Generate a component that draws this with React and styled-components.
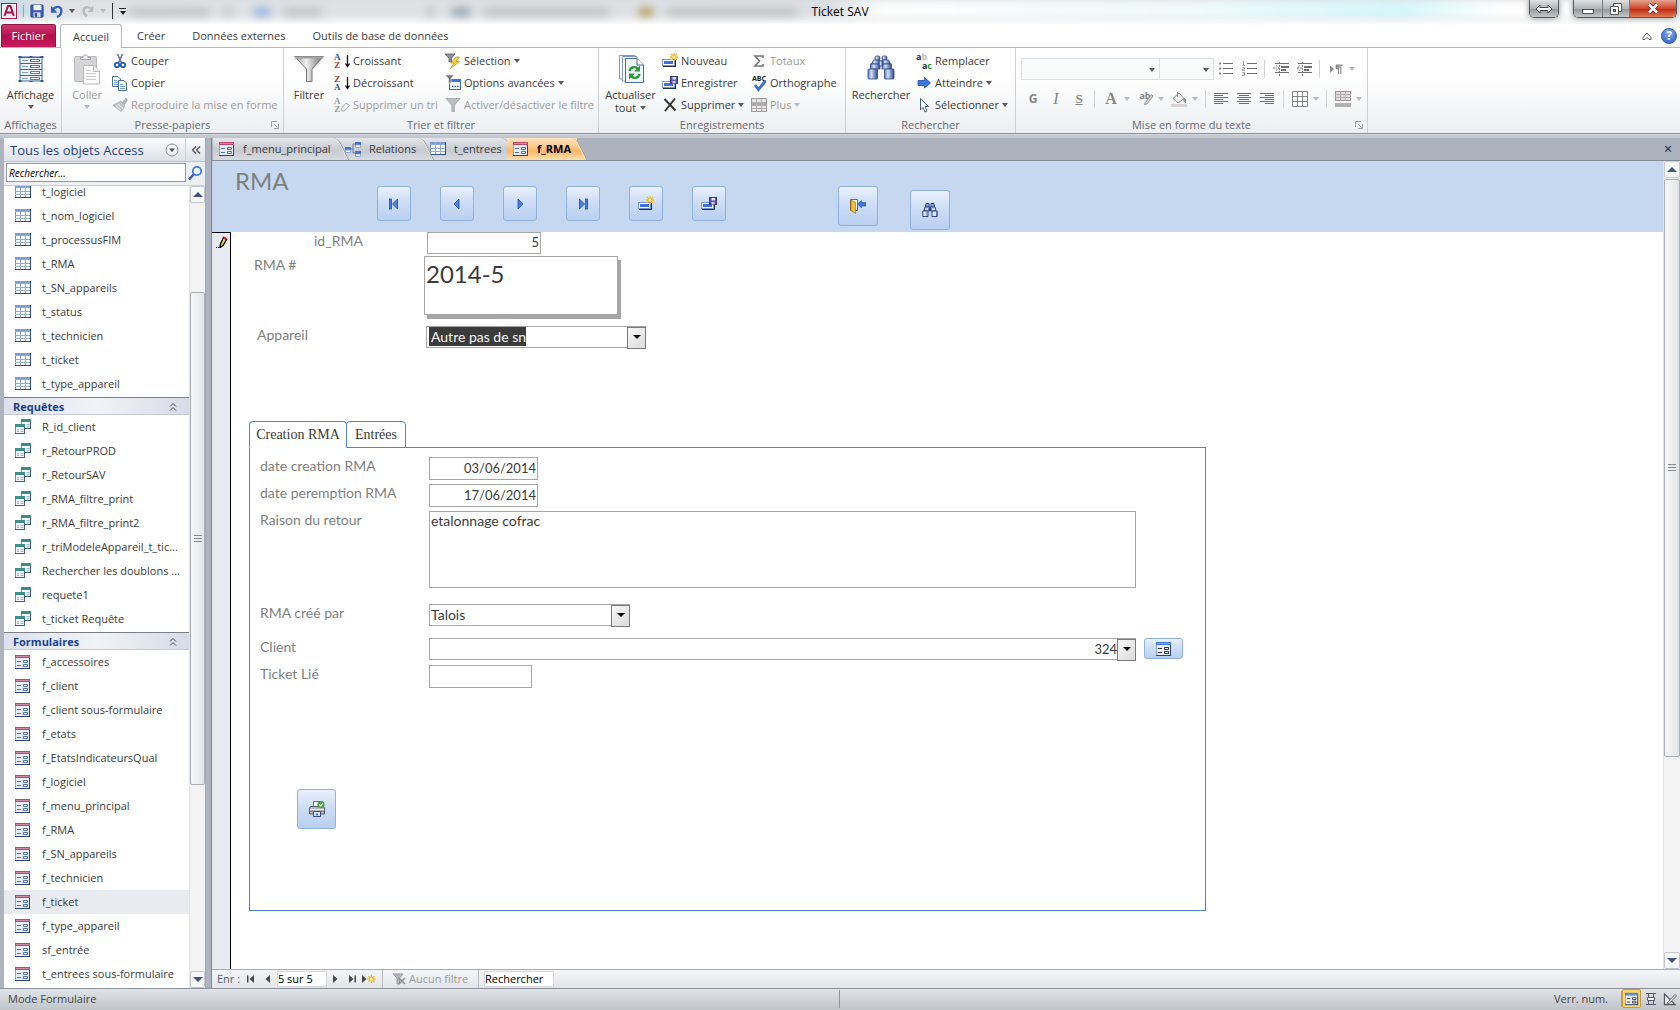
import React from "react";
import styled, { createGlobalStyle, css } from "styled-components";

const UI = '"Open Sans", "Noto Sans", "DejaVu Sans", sans-serif';
const FORM = 'Lato, "Open Sans", sans-serif';
const SERIF = '"Liberation Serif", "DejaVu Serif", serif';

const Global = createGlobalStyle`
  * { box-sizing: border-box; }
  html, body, #root { height: 100%; }
  body { margin: 0; font: 11px/16px ${UI}; color: #3b3b3b; background: #fff; overflow: hidden; }
  button, input, select, textarea { font: inherit; color: inherit; margin: 0; padding: 0; border: 0; border-radius: 0; background: none; outline: 0; }
  button { cursor: default; white-space: nowrap; }
  svg { display: block; flex: none; }
`;

/* ---------- Icons ---------- */

const Record16 = () => (
  <g>
    <rect x="1" y="7" width="13" height="7" fill="#1f2f55" />
    <rect x=".5" y="6.500" width="12" height="6" fill="#fff" stroke="#7b95c9" />
    <rect x="2" y="8" width="9" height="3" fill="#3c72dd" />
  </g>
);

const Spark = ({ x = 12, y = 4, r = 4 }) => (
  <g stroke="#f3b51d" strokeWidth="1.3">
    <path d={`M${x - r} ${y}H${x + r}M${x} ${y - r}V${y + r}M${x - r * 0.75} ${y - r * 0.75}L${x + r * 0.75} ${y + r * 0.75}M${x + r * 0.75} ${y - r * 0.75}L${x - r * 0.75} ${y + r * 0.75}`} />
    <circle cx={x} cy={y} r="1.6" fill="#fff3a8" stroke="none" />
  </g>
);

const Funnel = ({ fill = "#8d9299", edge = "#5e636b" }) => (
  <path d="M1 1.5H15L9.5 8V14.5H6.8V8Z" fill={fill} stroke={edge} strokeWidth=".8" />
);

const Lines = ({ rows, color = "#6f6f6f" }) => (
  <path d={rows.map(([x, y, w]) => `M${x} ${y + 0.5}h${w}`).join("")} stroke={color} />
);

const Sheet = ({ x, y }) => (
  <g transform={`translate(${x} ${y})`}>
    <rect x=".5" y=".5" width="9" height="9" fill="#f4f8fd" stroke="#6b88ab" />
    <rect x="0" y="0" width="10" height="3" fill="#3a8f8c" />
    <path d="M2 5.500h2M5.500 5.500h3M2 7.500h2M5.500 7.500h3" stroke="#9bb2d1" />
    <path d="M0 9.500H10M9.500 3V10" stroke="#3b5780" />
  </g>
);

const Binoculars = ({ id }) => (
  <g>
    <defs>
      <linearGradient id={id} x1="0" x2="1">
        <stop offset="0" stopColor="#5a78b5" />
        <stop offset=".35" stopColor="#d3e0f7" />
        <stop offset="1" stopColor="#2c4887" />
      </linearGradient>
    </defs>
    <g fill={`url(#${id})`} stroke="#2f4a86" strokeWidth=".8">
      <rect x="8" y="1" width="5" height="4" rx="1.5" />
      <rect x="15" y="1" width="5" height="4" rx="1.5" />
      <path d="M6.500 5H13V9H4.500Z" />
      <path d="M15 5H21.500L23.500 9H15Z" />
      <rect x="3.500" y="9" width="9.500" height="5" />
      <rect x="15" y="9" width="9.500" height="5" />
      <rect x="12" y="6" width="4" height="5" />
      <rect x="1" y="14" width="9.500" height="10" rx="1" />
      <rect x="17.500" y="14" width="9.500" height="10" rx="1" />
    </g>
  </g>
);

const Page = ({ x, y }) => (
  <g transform={`translate(${x} ${y})`}>
    <path d="M.5 .5H6L8.500 3V10.500H.5Z" fill="#fff" stroke="#4a6ea8" />
    <path d="M2 4.500h3M2 6.500h5M2 8.500h5" stroke="#6d9be0" />
  </g>
);

const FormArt = ({ head, ink }) => (
  <g>
    <rect x=".5" y="1.500" width="14" height="13" fill="#e7eefb" stroke="#8ea5cb" />
    <rect x="0" y="1" width="15" height="3" fill={head} />
    <path d="M1 2.500H14" stroke="#fff" strokeOpacity=".35" />
    <path d="M2 7.500H6M2 11.500H6" stroke={ink} />
    <path d="M8.500 6.500H12.500V8.500H8.500ZM8.500 10.500H12.500V12.500H8.500Z" fill="#fff" stroke={ink} />
    <path d="M0 14.500H15M14.500 4V15" stroke="#2e466f" />
  </g>
);

const ICONS = {
  app: [16, (
    <g>
      <rect x=".5" y=".5" width="15" height="15" fill="#fff" stroke="#a3194d" />
      <rect x="2" y="2" width="12" height="12" fill="#f9e6ee" />
      <path d="M3.500 13L7 3H9.500L12.800 13M5.500 9.500H11" fill="none" stroke="#a3194d" strokeWidth="2" />
    </g>
  )],
  save: [16, (
    <g>
      <rect x="1" y="1" width="14" height="14" rx="1" fill="#3a5cbf" stroke="#28408c" />
      <rect x="4" y="1" width="9" height="6" fill="#eef4ff" />
      <rect x="4" y="9.500" width="8" height="5.500" fill="#cfd9ee" />
      <rect x="5.500" y="10.500" width="2.500" height="4" fill="#28408c" />
    </g>
  )],
  undo: [16, (
    <g fill="none">
      <path d="M3 7C6 2 13 2 13 8C13 12 10 14 8 15" stroke="#2f62c9" strokeWidth="2.600" />
      <path d="M1 2V10H8.500Z" fill="#2f62c9" />
    </g>
  )],
  redo: [16, (
    <g fill="none">
      <path d="M12 6C9 2 3 3 3 8C3 11 5 13 7 14" stroke="#b7bbc0" strokeWidth="2.600" />
      <path d="M14 2V9H7.500Z" fill="#b7bbc0" />
    </g>
  )],
  formView: [28, (
    <g>
      <rect x="3" y="2" width="22" height="24" fill="#eef3fb" stroke="#3c64a0" />
      {[2, 8, 14, 20].map((y) => (
        <g key={y}>
          <path d={`M3 ${y + 0.5}H25`} stroke="#3c64a0" />
          <path d={`M5 ${y + 3.5}h6`} stroke="#7f9fcb" />
          <rect x="13.500" y={y + 2.5} width="9" height="2" fill="#fff" stroke="#5c80b8" />
        </g>
      ))}
      <path d="M1.500 1h3v2h-3zM23.500 1h3v2h-3zM1.500 25h3v2h-3zM23.500 25h3v2h-3zM12.500 1h3v1h-3zM12.500 26h3v1h-3z" fill="#2d5793" />
    </g>
  )],
  paste: [32, (
    <g>
      <rect x="3.500" y="3.500" width="22" height="25" rx="1.500" fill="#d5d5d8" stroke="#b9b9bc" />
      <path d="M9.500 6.500V4.500H12C12 1 17 1 17 4.500H19.500V6.500Z" fill="#eee" stroke="#a7a7ab" />
      <path d="M12.500 12.500H23L28.500 18V31H12.500Z" fill="#fafafa" stroke="#bbb" />
      <path d="M22.500 12.500V18.500H28.500" fill="#eee" stroke="#bbb" />
      <path d="M15 17.500h5M15 20.500h10M15 23.500h10M15 26.500h10" stroke="#ccc" />
    </g>
  )],
  cut: [16, (
    <g fill="none">
      <path d="M5.500 1L9.500 10M10.500 1L6.500 10" stroke="#5c6f91" strokeWidth="1.500" />
      <circle cx="5" cy="12" r="2.200" stroke="#1f5ac0" strokeWidth="1.800" />
      <circle cx="11" cy="12" r="2.200" stroke="#1f5ac0" strokeWidth="1.800" />
    </g>
  )],
  copy: [16, <g><Page x={0} y={1} /><Page x={6} y={5} /></g>],
  brush: [16, (
    <g>
      <path d="M10 6L14 1L15.500 3L12 8Z" fill="#b4b4b4" stroke="#999" strokeWidth=".6" />
      <path d="M1 8L9 4L13 9L9 14.500Z" fill="#c6c6c6" stroke="#aaa" strokeWidth=".7" />
      <path d="M4 9L9 13M6 7L11 11.500" stroke="#efefef" />
    </g>
  )],
  funnelBig: [32, (
    <g>
      <defs>
        <linearGradient id="fb" x1="0" x2="1">
          <stop offset="0" stopColor="#8d8d8d" /><stop offset=".4" stopColor="#f1f1f1" /><stop offset="1" stopColor="#6b6b6b" />
        </linearGradient>
      </defs>
      <path d="M1.500 3.500H30.500L19 16V28.500H13.500V16Z" fill="url(#fb)" stroke="#757575" />
      <path d="M2 4.500H30" stroke="#a4a4a4" strokeWidth="2" />
    </g>
  )],
  funnelGrey: [16, <Funnel fill="#bcbcbc" edge="#a2a2a2" />],
  arrowDown16: [16, <path d="M13.500 2V13M11.500 10.500L13.500 13.500L15.500 10.500" stroke="#111" fill="none" strokeWidth="1.300" />],
  eraser: [16, <path d="M7 12L12 6L15.500 8.500L10.500 14H8Z" fill="#f1f1f1" stroke="#aaa" />],
  selection: [16, (
    <g>
      <path d="M0 1H10L6.500 5V9H4V5Z" fill="#8f949b" stroke="#555b63" strokeWidth=".8" />
      <path d="M11 4L6 10H9L5.500 15.500L14.500 8.500H11L14.500 4Z" fill="#fcd344" stroke="#c98a14" strokeWidth=".7" />
    </g>
  )],
  advanced: [16, (
    <g>
      <rect x="4.500" y="4.500" width="11" height="10" fill="#f6faff" stroke="#4268a8" />
      <rect x="4" y="4" width="12" height="3" fill="#3f78d8" />
      <path d="M7 11.500h1.500M9.500 11.500h1.500M12 11.500h1.500" stroke="#3f62a0" strokeWidth="1.500" />
      <path d="M0 0H9L6 3.500V8H3.500V3.500Z" fill="#70757d" stroke="#fff" strokeWidth=".5" />
    </g>
  )],
  refresh: [32, (
    <g fill="#fff" stroke="#7c99c4">
      <path d="M4.500 2.500H20V26H4.500Z" /><path d="M7.500 3.500H22V28H7.500Z" />
      <path d="M10.500 5.500H22L28.500 12V29.500H10.500Z" fill="#eef5fe" stroke="#4b6da3" />
      <path d="M22 5.500V12H28.500" fill="#fff" stroke="#4b6da3" />
      <g fill="none" stroke="#2e9a35" strokeWidth="2.400">
        <path d="M14.500 18C15.500 13.500 21 13 23 16" /><path d="M24.500 21C23.500 25.500 18 26 16 23" />
      </g>
      <path d="M25 12.500V18.500H19Z" fill="#2e9a35" stroke="none" /><path d="M14 26.500V20.500H20Z" fill="#2e9a35" stroke="none" />
    </g>
  )],
  newRecord: [16, <g><Record16 /><Spark /></g>],
  saveRecord: [16, (
    <g><Record16 /><rect x="8.500" y="1.500" width="7" height="7" fill="#5a55b5" stroke="#3a3680" /><rect x="10.500" y="2" width="3.500" height="2.500" fill="#e4e8ff" /><rect x="10.500" y="6" width="3" height="2.500" fill="#c9cef1" /></g>
  )],
  delete: [16, <path d="M2.500 2L13.500 13.500M13 1.500L3 14" stroke="#333" strokeWidth="2" fill="none" />],
  sigma: [16, <path d="M12 5V3H4L8.500 8L4 13H12V11" fill="none" stroke="#777" strokeWidth="1.700" />],
  check: [16, <path d="M4 9L7.500 13.500L14.500 5" fill="none" stroke="#3b6fd0" strokeWidth="2.800" />],
  more: [16, (
    <g><rect x=".5" y="1.500" width="15" height="13" fill="#e6e6e6" stroke="#9c9c9c" /><rect x="1" y="5" width="14" height="3" fill="#aaa" /><path d="M1 5.500H15M1 8.500H15M1 11.500H15M5.500 2V14M10.500 2V14" stroke="#b5b0b0" /></g>
  )],
  binoBig: [28, <Binoculars id="bb" />],
  binoSmall: [16, (
    <g>
      <path d="M4 1.500H7V5H3.500ZM9 1.500H12L12.500 5H9Z" fill="#8fa7d6" stroke="#2a4584" />
      <path d="M3 5H7.500V9H2ZM8.500 5H13L14 9H8.500Z" fill="#c7d6f2" stroke="#2a4584" />
      <path d="M6.500 6H9.500V9H6.500Z" fill="#2a4584" />
      <path d="M.8 9H6V14.500H.8ZM10 9H15.200V14.500H10Z" fill="#dfe9fb" stroke="#2a4584" />
      <path d="M5 9.500V14M14.500 9.500V14" stroke="#5673b4" />
    </g>
  )],
  goto: [16, <path d="M2 5.500H8.500V2.500L14.500 8L8.500 13V10.500H2Z" fill="#3c77e0" stroke="#1d4ea8" strokeWidth=".8" />],
  cursor: [16, <path d="M4.500 1.500V13L7 10.500L9 15L11 14L9 9.500H12.500Z" fill="#fff" stroke="#46618f" />],
  bullets: [16, <g><Lines rows={[[5, 2, 10], [5, 7, 10], [5, 12, 10]]} /><path d="M1 2.500h2M1 7.500h2M1 12.500h2" stroke="#888" strokeWidth="2" /></g>],
  numbers: [16, <g><Lines rows={[[6, 2, 10], [6, 7, 10], [6, 12, 10]]} /><path d="M2.500 0V4M1.500 4.500h2.500M1.500 6.500h2v1.500h-2v1.500h2.500M1.500 11.500h2v3h-2.500M1.500 13h2" stroke="#999" fill="none" /></g>],
  indent: [16, <g><Lines rows={[[2, 2, 14], [8, 5, 8], [8, 6, 8], [8, 8, 5], [8, 9, 5], [2, 11, 14]]} /><path d="M0 7H4M3 4.500L6 7L3 9.500M6.500 1V15" stroke="#777" fill="none" strokeDasharray="2 1" /></g>],
  outdent: [16, <g><Lines rows={[[2, 2, 14], [8, 5, 8], [8, 6, 8], [8, 8, 5], [8, 9, 5], [2, 11, 14]]} /><path d="M6 7H2M4 4.500L1 7L4 9.500M6.500 1V15" stroke="#777" fill="none" strokeDasharray="2 1" /></g>],
  ltr: [16, <g><path d="M2 4.500V12L6 8Z" fill="#8d8d8d" /><path d="M8 4H14V5M10.500 4V13M12.800 4V13" stroke="#8d8d8d" fill="none" strokeWidth="1.200" /><circle cx="9.500" cy="6" r="2.200" fill="#8d8d8d" /></g>],
  highlight: [16, <path d="M8 12L14.500 3.500L16 5L10 13L7.500 13.500Z" fill="#ddd" stroke="#8f8f8f" />],
  bucket: [16, <g><path d="M2 7.500L8 2L13 7.500L7 12Z" fill="#eee" stroke="#8a8a8a" /><path d="M6.500 1V6M13 7C15 8 15 10 14.500 11.500C12.500 11 12.500 9 13 7" fill="#999" stroke="#8a8a8a" /><rect x="0" y="13" width="16" height="3" fill="#d9d3d3" /></g>],
  alignL: [14, <Lines rows={[[0, 1, 14], [0, 3, 9], [0, 5, 14], [0, 7, 9], [0, 9, 14], [0, 11, 9]]} />],
  alignC: [14, <Lines rows={[[0, 1, 14], [2, 3, 10], [0, 5, 14], [2, 7, 10], [0, 9, 14], [2, 11, 10]]} />],
  alignR: [14, <Lines rows={[[0, 1, 14], [5, 3, 9], [0, 5, 14], [5, 7, 9], [0, 9, 14], [5, 11, 9]]} />],
  grid: [16, <path d="M.5 .5H15.500V15.500H.5ZM.5 5.500H15.500M.5 10.500H15.500M5.500 .5V15.500M10.500 .5V15.500" fill="#fff" stroke="#858585" />],
  altFill: [16, <g><rect x=".5" y="0.500" width="15" height="9" fill="#e2dede" stroke="#9a9494" /><path d="M0 3.500H16M0 6.500H16M5.500 0V10M10.500 0V10" stroke="#b5adad" /><rect x="0" y="12" width="16" height="4" fill="#b3afaf" /></g>],
  launcher: [8, <path d="M.5 6V.5H6M3 3L6.500 6.500M7.500 3V7.500H3" fill="none" stroke="#9a9da1" />],
  table: [16, (
    <g>
      <rect x=".5" y="1.500" width="15" height="12" fill="#f7faff" stroke="#7591bb" />
      <rect x="0" y="1" width="16" height="3" fill="#7b9cd2" />
      <path d="M0 3.500H16M0 7.500H16M0 10.500H16M5.500 1V14M10.500 1V14" stroke="#93abd1" />
      <path d="M0 13.500H16M15.500 1V14" stroke="#31507f" />
    </g>
  )],
  query: [16, <g><Sheet x={6} y={0} /><Sheet x={0} y={5} /></g>],
  form: [16, <FormArt head="#c2456f" ink="#56719f" />],
  formBlue: [16, <FormArt head="#3f78dc" ink="#333" />],
  relations: [16, (
    <g><path d="M5 8H8M8 3V12M8 3H10M8 12H10" stroke="#6f7f99" fill="none" /><rect x="0" y="6" width="6" height="3" fill="#3f74cf" /><rect x="10" y="1" width="6" height="3" fill="#3f74cf" /><path d="M10.500 4H15.500V6.500H10.500ZM.5 9H5.500V11.500H.5ZM10.500 13H15.500V15.500H10.500Z" fill="#fff" stroke="#8fa6cb" /><rect x="10" y="10" width="6" height="3" fill="#3f74cf" /></g>
  )],
  search: [16, <g fill="none"><path d="M7 9L2 14.500" stroke="#7a4a9a" strokeWidth="2.600" /><path d="M7 9L2 14.500" stroke="#2d68cd" strokeWidth="1.600" /><circle cx="10" cy="6" r="4.200" stroke="#3b7bdf" strokeWidth="1.800" fill="#eef6ff" /></g>],
  menuCircle: [14, <g><circle cx="7" cy="7" r="6" fill="#f3f4f7" stroke="#8a8c91" /><path d="M4 5.500H10L7 9Z" fill="#4b4d52" /></g>],
  chevLeft: [10, <path d="M5 1.500L1.500 5L5 8.500M9 1.500L5.500 5L9 8.500" fill="none" stroke="#444" strokeWidth="1.200" />],
  chevUp: [10, <path d="M2 4.500L5 1.500L8 4.500M2 8.500L5 5.500L8 8.500" fill="none" stroke="#444" />],
  caretUp: [10, <path d="M1 6.500L5 2L9 6.500V8.500H7L5 6.500L3 8.500H1Z" fill="#fff" stroke="#555" />],
  first: [12, <g fill="#4c82e6" stroke="#1d4aa5" strokeWidth=".8"><rect x="1.500" y="1" width="2" height="10" /><path d="M9.500 1V11L4.500 6Z" /></g>],
  prev: [12, <path d="M8 1V11L3 6Z" fill="#4c82e6" stroke="#1d4aa5" strokeWidth=".8" />],
  next: [12, <path d="M4 1V11L9 6Z" fill="#4c82e6" stroke="#1d4aa5" strokeWidth=".8" />],
  last: [12, <g fill="#4c82e6" stroke="#1d4aa5" strokeWidth=".8"><rect x="8.500" y="1" width="2" height="10" /><path d="M2.500 1V11L7.500 6Z" /></g>],
  exit: [16, (
    <g><path d="M.5 1.500H7.500V12.500H.5Z" fill="#fff" stroke="#7a6035" /><path d="M1 2L5.500 4.500V15.500L1 12.500Z" fill="#f4bd3c" stroke="#a7741a" strokeWidth=".7" /><path d="M7.500 6L11.500 2.500V4.500H16V8H11.500V10Z" fill="#3b76dd" stroke="#1d4ea8" strokeWidth=".6" /></g>
  )],
  print: [16, (
    <g>
      <path d="M4.500 .5H11V6H4.500Z" fill="#fff" stroke="#5a6f97" />
      <path d="M1.500 5.500H14.500L15.500 7V13H.5V7Z" fill="#b4b8bd" stroke="#585c63" />
      <path d="M1 8.500H15" stroke="#eee" /><path d="M1 10.500H15" stroke="#7a7e84" /><path d="M4.500 10.500H11.500V15.500H4.500Z" fill="#d5e7ff" stroke="#33507f" /><path d="M7 13.500H9" stroke="#3c77e0" strokeWidth="2" />
      <circle cx="12" cy="3.500" r="3.300" fill="#4da83f" stroke="#2d7a25" strokeWidth=".5" /><path d="M10.300 3.500L11.700 5L14 2" stroke="#fff" fill="none" strokeWidth="1.200" />
    </g>
  )],
  pencil: [12, <g><path d="M0 11.500H1M2 11.500H3" stroke="#000" /><path d="M4.500 8L7.500 1.500L10.500 3.500L7 9.500L4 11.500Z" fill="#f1e13d" stroke="#000" strokeWidth="1.400" /><path d="M7.500 1.500L10.500 3" stroke="#d3281e" strokeWidth="2" /></g>],
  nFirst: [10, <path d="M1 1.500H2.500V8.500H1ZM8 1V9L3.500 5Z" fill="#46484c" />],
  nPrev: [10, <path d="M7 1V9L2.500 5Z" fill="#46484c" />],
  nNext: [10, <path d="M3 1V9L7.500 5Z" fill="#46484c" />],
  nLast: [10, <path d="M7.500 1.500H9V8.500H7.500ZM2 1V9L6.500 5Z" fill="#46484c" />],
  nNew: [14, <g><path d="M0 3V11L4.500 7Z" fill="#46484c" /><Spark x={9.5} y={7} r={4} /></g>],
  noFilter: [14, <g><path d="M1 2H11L7.500 6V12H5V6Z" fill="#b5b5b5" stroke="#999" /><path d="M7 6L13 12M13 6L7 12" stroke="#8b8b8b" strokeWidth="1.500" /></g>],
  datasheet: [14, <g><path d="M2 1.500H12M2 12.500H12M4.500 2V5M9.500 2V5M4.500 9V12M9.500 9V12" stroke="#555b66" /><path d="M3.500 5.500H10.500V8.500H3.500Z" fill="#fff" stroke="#555b66" /></g>],
  design: [14, <g><path d="M1.500 2V12.500H12Z" fill="#f2f2f2" stroke="#555b66" strokeWidth="1.300" /><path d="M4 11L12 2.500L13.500 4L6 11.500Z" fill="#e6e6e6" stroke="#6c7078" /></g>],
};

const Icon = ({ name, size }) => {
  const [box, art] = ICONS[name];
  return <svg width={size || box} height={size || box} viewBox={`0 0 ${box} ${box}`} aria-hidden="true">{art}</svg>;
};

const Caret = styled.i`
  width: 0; height: 0; flex: none;
  border: 3px solid transparent; border-bottom: 0;
  border-top: 4px solid ${(p) => (p.$dim ? "#b9b9b9" : "#5a5a5a")};
`;

/* ---------- Window frame ---------- */

const Window = styled.div`
  display: flex; flex-direction: column; height: 100vh; background: #adb4bf;
`;

const TitleBar = styled.header`
  position: relative; height: 24px; flex: none; display: flex; align-items: flex-start; justify-content: space-between;
  background: linear-gradient(#d9dcdf 0, #e9ebec 14px, #fbfbfb);
  overflow: hidden;
`;
const Glass = styled.div`
  position: absolute; inset: 0; filter: blur(5px);
  background: linear-gradient(90deg, #a9d8ea 0, #dfe2e5 40px, #dcdfe2 830px, #fdfdfd 880px, #eefafc 1200px, #d3f6fb 1400px, #fff 1500px);
  -webkit-mask-image: linear-gradient(#000 12px, transparent);
`;
const Smudges = styled.div`
  position: absolute; inset: 8px auto auto 130px; display: flex; gap: 14px; filter: blur(4px);
`;
const Smudge = styled.span`
  width: ${(p) => p.$w}px; height: 8px; background: ${(p) => p.$c || "#bfc2c6"}; margin-left: ${(p) => p.$gap || 0}px;
`;
const Quick = styled.div`
  position: relative; display: flex; align-items: center; gap: 6px; height: 22px; padding-left: 1px;
  button { display: flex; align-items: center; gap: 5px; }
`;
const CustomMark = styled.span`
  display: grid; justify-items: center; gap: 2px;
  &::before { content: ""; width: 7px; height: 1px; background: #222; }
  i { border-top-color: #222; }
`;
const Bar = styled.i`
  width: 1px; height: ${(p) => p.$h || 14}px; background: ${(p) => p.$c || "#9fa3a8"};
`;
const Title = styled.h1`
  position: absolute; inset: 4px 0 auto; margin: 0; text-align: center; font-size: 12px; line-height: 16px; font-weight: 400; color: #000;
`;
const WinButtons = styled.div`
  position: relative; display: flex; gap: 14px; padding-right: 3px;
`;
const WinGroup = styled.div`
  display: flex; height: 18px; border: 1px solid #55585c; border-top: 0; border-radius: 0 0 5px 5px; overflow: hidden;
  box-shadow: 0 0 6px #8a8d90;
`;
const WinButton = styled.button`
  width: ${(p) => p.$w}px; display: grid; place-items: center;
  background: ${(p) => (p.$red ? "linear-gradient(#e3a493, #d1442a 50%, #c02c14 55%, #dd7a55)" : "linear-gradient(#dfe1e3, #b3b6b9 50%, #96999c 55%, #c5c8ca)")};
  & + & { border-left: 1px solid #777a7e; }
`;

/* ---------- Ribbon ---------- */

const RibbonTabs = styled.nav`
  display: flex; align-items: flex-end; height: 24px; flex: none; padding-left: 1px; background: #fff;
  border-bottom: 1px solid #b5b8bb;
`;
const FileTab = styled.button`
  width: 55px; height: 23px; border-radius: 3px 3px 0 0; border: 1px solid #8d1440; border-bottom: 0; color: #fff;
  background: linear-gradient(#c93c70, #b50f4c 50%, #c71a5b);
`;
const RibbonTab = styled.button`
  height: 23px; padding: 0 13px 0 14px; color: #3d3d3d;
  ${(p) => p.$on && css`
    height: 24px; margin: 0 1px -1px 4px; background: #fff; border: 1px solid #b5b8bb; border-bottom: 0; border-radius: 3px 3px 0 0; padding: 0 12px;
  `}
`;
const TabsEnd = styled.div`
  margin-left: auto; display: flex; align-items: center; gap: 9px; height: 23px; padding-right: 3px;
`;
const Help = styled.button`
  width: 16px; height: 16px; border-radius: 50%; color: #fff; font-weight: 700; font-size: 12px; line-height: 14px;
  background: radial-gradient(circle at 50% 30%, #7fabf0, #2c5fc4); border: 1px solid #2a56ad;
`;
const Ribbon = styled.section`
  display: flex; height: 86px; flex: none; background: linear-gradient(#fff 0, #fff 30px, #eceef1);
  border-bottom: 1px solid #8b9099; box-shadow: 0 1px #d5d9df, 0 4px #c2c8d0; margin-bottom: 4px;
`;
const Group = styled.div`
  width: ${(p) => p.$w}px; flex: none; display: flex; flex-direction: column; padding-top: 2px;
  border-right: 1px solid #cdd0d4;
`;
const GroupBody = styled.div`
  display: flex; height: 66px;
`;
const GroupName = styled.div`
  position: relative; height: 17px; line-height: 17px; text-align: center; color: #676b73;
  button { position: absolute; right: 4px; top: 5px; }
`;
const BigButton = styled.button`
  width: ${(p) => p.$w}px; flex: none; display: flex; flex-direction: column; align-items: center; gap: 1px; padding-top: 1px;
  color: ${(p) => (p.disabled ? "#9b9b9b" : "#3b3b3b")}; line-height: 13px; white-space: normal;
  > svg { height: 36px; }
  > i { margin-top: 3px; }
  span { display: inline-flex; align-items: center; gap: 4px; line-height: 11px; }
`;
const Column = styled.div`
  width: ${(p) => p.$w}px; flex: none; display: flex; flex-direction: column;
`;
const SmallButton = styled.button`
  height: 22px; display: flex; align-items: center; gap: 3px;
  color: ${(p) => (p.disabled ? "#9b9b9b" : "#3b3b3b")};
`;
const SortGlyph = styled.span`
  display: flex; width: 16px; height: 16px; position: relative;
  > svg { position: absolute; left: 0; top: 0; }
  b { display: flex; flex-direction: column; font: 700 9px/8px ${SERIF}; color: ${(p) => p.$top}; }
  b em { font-style: normal; color: ${(p) => p.$bottom}; }
`;
const AbGlyph = styled.span`
  display: flex; flex-direction: column; align-items: flex-start; width: 16px; height: 18px; font: 700 9px/9px ${UI}; color: #333;
  em { font-style: normal; color: #bbb; }
  u { text-decoration: none; align-self: flex-end; }
  u em { color: #1a9a2b; }
`;
const AbcGlyph = styled.span`
  position: relative; width: 16px; height: 16px; font: 700 7px/7px ${UI}; color: #222;
  > svg { position: absolute; left: 0; top: 1px; }
`;
const FormatBody = styled.div`
  height: 66px; padding: 8px 0 0 5px; display: flex; flex-direction: column; gap: 8px;
`;
const FormatRow = styled.div`
  display: flex; align-items: center; height: 22px;
`;
const FontBox = styled.div`
  position: relative; width: ${(p) => p.$w}px; height: 22px; border: 1px solid #dcdfe3; background: #fafbfb;
  & + & { border-left: 0; }
  select { width: 100%; height: 100%; appearance: none; }
  i { position: absolute; right: 4px; top: 9px; }
`;
const Tool = styled.button`
  width: ${(p) => (p.$split ? 34 : 23)}px; height: 22px; display: flex; align-items: center; gap: 5px; padding-left: 4px; color: #858585;
  b, em, u, strong { width: 16px; text-align: center; }
  b { font: 700 12px/16px ${UI}; }
  em { font: italic 16px/16px ${SERIF}; }
  u { font: 700 13px/16px ${SERIF}; }
  strong { font: 700 16px/16px ${SERIF}; }
`;
const Highlighter = styled.span`
  position: relative; width: 16px; height: 16px; font: 700 9px/10px ${UI};
  > svg { position: absolute; inset: 0; }
`;
const ToolSep = styled.i`
  width: 1px; height: 18px; margin: 0 4px; background: #cfd2d6;
`;

/* ---------- Navigation pane ---------- */

const Workspace = styled.div`
  flex: 1; min-height: 0; display: flex; gap: 5px; padding-left: 4px;
`;
const NavPane = styled.aside`
  width: 202px; flex: none; display: flex; flex-direction: column; background: #fff; border-right: 1px solid #a2a9b3;
`;
const NavHead = styled.div`
  height: 24px; flex: none; display: flex; align-items: center; border-bottom: 1px solid #bcc2cc;
  background: linear-gradient(#fbfbfc, #dde1e9);
  h2 { flex: 1; margin: 0; padding-left: 6px; font-size: 13px; font-weight: 400; color: #1f3f8c; }
  button { width: 26px; height: 23px; display: grid; place-items: center; }
  button + button { width: 20px; border-left: 1px solid #c9ced7; }
`;
const NavSearch = styled.div`
  height: 24px; flex: none; display: flex; align-items: center; gap: 1px; padding: 1px 2px 3px; background: #eceff4; border-bottom: 1px solid #c9ced7;
  input { width: 182px; height: 19px; border: 1px solid #97999d; background: #fff; padding-left: 2px; font-size: 10px; font-style: italic; color: #000; }
  input::placeholder { color: #000; opacity: 1; }
`;
const NavBody = styled.div`
  flex: 1; min-height: 0; display: flex; overflow: hidden;
`;
const NavList = styled.div`
  flex: 1; min-width: 0; margin-top: -6px;
`;
const NavGroup = styled.button`
  width: 100%; height: 18px; margin-top: 1px; display: flex; align-items: center; justify-content: space-between; padding: 1px 11px 0 9px;
  border-top: 1px solid #7b7f86; border-bottom: 1px solid #c5cad6; font-weight: 700; color: #17408f;
  background: linear-gradient(90deg, #dde1ec, #f1f3f6 50%, #d7dbe8);
`;
const NavItem = styled.button`
  width: 100%; height: 24px; display: flex; align-items: center; gap: 11px; padding-left: 11px; line-height: 12px;
  background: ${(p) => (p.$hover ? "#e8ebf0" : "none")};
`;

/* ---------- Scroll bars ---------- */

const Track = styled.div`
  width: ${(p) => p.$w}px; flex: none; display: flex; flex-direction: column; align-items: stretch; background: #f3f3f4; border-left: 1px solid #e3e4e6;
`;
const TrackButton = styled.button`
  height: 17px; flex: none; display: grid; place-items: center; border: 1px solid #c4c8ce; border-radius: 2px; background: #f6f7f9;
  i { border: 5px solid transparent; }
  i.up { border-top: 0; border-bottom: 5px solid #44557f; }
  i.down { border-bottom: 0; border-top: 5px solid #44557f; }
`;
const Thumb = styled.div`
  flex: ${(p) => p.$share} 1 0; display: grid; place-items: center; border: 1px solid #a9adb4; border-radius: 2px;
  background: linear-gradient(90deg, #f7f7f7, #e3e4e6);
  &::after { content: ""; width: 8px; height: 7px; background: repeating-linear-gradient(#83868b 0 1px, transparent 1px 3px); }
`;
const Gap = styled.div`
  flex: ${(p) => p.$share} 1 0;
`;
const ScrollBar = ({ w, before, thumb, after }) => (
  <Track $w={w}>
    <TrackButton aria-label="Haut"><i className="up" /></TrackButton>
    <Gap $share={before} />
    <Thumb $share={thumb} />
    <Gap $share={after} />
    <TrackButton aria-label="Bas"><i className="down" /></TrackButton>
  </Track>
);

/* ---------- Documents ---------- */

const Documents = styled.main`
  flex: 1; min-width: 0; display: flex; flex-direction: column; border-left: 1px solid #82878f; background: #fff;
`;
const DocTabs = styled.div`
  display: flex; height: 23px; flex: none; padding-left: 1px; background: #abb2be; border-bottom: 1px solid #858b95;
  > button:last-child { margin-left: auto; width: 24px; font-size: 14px; color: #222; }
`;
const DocTab = styled.button`
  position: relative; z-index: ${(p) => (p.$on ? 9 : p.$z)}; width: ${(p) => p.$w}px; height: 22px;
  display: flex; align-items: center; gap: 8px; padding-left: 6px; isolation: isolate;
  font-weight: ${(p) => (p.$on ? 700 : 400)}; color: ${(p) => (p.$on ? "#000" : "#3b3b3b")};
  background: linear-gradient(${(p) => (p.$on ? "#fbe3c4, #fdc987 40%, #fbb765 60%, #fee0b2" : "#e4e6ea, #c6cad1 55%, #d8dbe1")});
  &::after {
    content: ""; position: absolute; z-index: -1; top: 0; bottom: 0; right: -5px; width: 20px;
    transform: skewX(26deg); border-radius: 0 6px 0 0; background: inherit;
    border-right: 1px solid ${(p) => (p.$on ? "#c9a06a" : "#8b919c")}; box-shadow: inset -1px 0 #f4f5f7;
  }
`;
const DocBody = styled.div`
  flex: 1; min-height: 0; display: flex;
`;
const FormView = styled.div`
  flex: 1; min-width: 0; display: flex; flex-direction: column; font: 14px/20px ${FORM}; color: #3b3b3b;
`;
const FormHeader = styled.div`
  height: 71px; flex: none; display: flex; align-items: flex-start; gap: 29px; padding: 25px 0 0 23px; background: #c6d8f0;
  h2 { width: 113px; margin: -20px 0 0; font-size: 24px; line-height: 30px; font-weight: 400; color: #7f7f7f; }
`;
const FormButton = styled.button`
  width: ${(p) => p.$w || 34}px; height: ${(p) => p.$h || 35}px; flex: none; display: grid; place-items: center;
  margin: ${(p) => p.$m || 0};
  border: 1px solid #8fb1de; border-radius: 3px; background: linear-gradient(#e9f0fb, #cbdcf5 50%, #b9d0f2);
`;
const Detail = styled.div`
  flex: 1; min-height: 0; display: flex;
`;
const Selector = styled.div`
  width: 19px; flex: none; padding: 3px 0 0 4px; background: #e7ebf1; border-top: 1px solid #000; border-right: 1px solid #000;
`;
const Fields = styled.div`
  flex: 1; min-width: 0; display: flex; flex-direction: column;
`;
const Row = styled.div`
  display: flex; margin-top: ${(p) => p.$mt || 0}px; padding-left: ${(p) => p.$in || 0}px;
`;
const Label = styled.label`
  width: ${(p) => p.$w || 169}px; flex: none; line-height: 18px; color: #7f7f7f;
`;
const frame = css`
  border: 1px solid #a6a6a6; background: #fff; color: #3b3b3b;
`;
const TextBox = styled.input`
  ${frame} width: ${(p) => p.$w}px; height: ${(p) => p.$h || 23}px; padding: 0 1px 2px; font-size: 13px; text-align: ${(p) => (p.$right ? "right" : "left")};
`;
const BigBox = styled.textarea`
  ${frame} width: 194px; height: 59px; padding: 2px 1px; resize: none; font-size: 24px; line-height: 30px;
  box-shadow: 3px 4px #a6a6a6;
`;
const Memo = styled.textarea`
  ${frame} flex: 1; min-width: 0; height: 77px; padding: 0 1px; resize: none; line-height: 18px;
`;
const Combo = styled.div`
  ${frame} ${(p) => (p.$w ? `width: ${p.$w}px` : "flex: 1; min-width: 0")}; height: 22px; display: flex; position: relative;
  ${(p) => p.$right && "font-size: 13px;"}
  select { flex: 1; min-width: 0; height: 18px; padding: 0 18px 0 1px; appearance: none; text-align-last: ${(p) => (p.$right ? "right" : "left")}; }
  select.picked { flex: none; field-sizing: content; height: 19px; margin: 0 0 0 2px; padding: 0 0 0 2px; background: #3b3b3b; color: #f4f4f4; }
  &::after {
    content: ""; position: absolute; right: -1px; top: 0; width: 17px; height: 20px; pointer-events: none; border: 1px solid #7a7a7a;
    background: linear-gradient(135deg, #f7f7f7, #dcdcdc);
  }
  &::before {
    content: ""; position: absolute; z-index: 1; right: 4px; top: 8px; border: 4px solid transparent; border-top-color: #000; border-bottom: 0; pointer-events: none;
  }
`;
const TabSet = styled.div`
  width: 957px; max-width: calc(100% - 36px); margin: 73px 0 0 18px;
`;
const TabHeads = styled.div`
  display: flex; margin-bottom: -1px; position: relative;
`;
const TabHead = styled.button`
  height: 27px; padding: 0 6px; font: 14px/22px ${SERIF}; color: #3b3b3b; background: #fff;
  min-width: ${(p) => (p.$on ? 98 : 60)}px;
  border: 1px solid #4a86cf; border-radius: 4px 4px 0 0; border-bottom-color: ${(p) => (p.$on ? "#fff" : "#4a86cf")};
  & + & { margin-left: -1px; border-bottom-left-radius: 0; }
`;
const TabPanel = styled.div`
  min-height: 464px; padding: 9px 22px 0 10px; border: 1px solid #4a86cf;
`;
const Trailing = styled.div`
  width: 47px; flex: none; padding-left: 8px;
`;

/* ---------- Record and status bars ---------- */

const RecordBar = styled.div`
  height: 19px; flex: none; display: flex; align-items: center; padding-left: 5px; border-top: 1px solid #a7acb4;
  background: linear-gradient(#f4f5f7, #e3e5ea); color: #5a5e66;
  > button { width: 17px; height: 17px; display: grid; place-items: center; }
`;
const BarInput = styled.input`
  width: ${(p) => p.$w}px; height: 16px; border: 1px solid #d5d7db; background: #fff; color: #000;
`;
const NoFilter = styled.span`
  display: flex; align-items: center; gap: 3px; width: 97px; height: 18px; margin: 0 5px 0 4px; padding-left: 9px; color: #999;
  border: solid #b9bdc5; border-width: 0 1px;
`;
const StatusBar = styled.footer`
  height: 22px; flex: none; display: flex; align-items: center; padding: 0 1px 2px 8px; border-top: 1px solid #8b9099; color: #444;
  background: linear-gradient(#e1e4e7, #bfc4c9);
  > span:first-child { flex: 0 0 calc(50% - 5px); }
  > span:nth-child(2) { flex: 1; border-left: 1px solid #8e939a; text-align: right; padding-right: 13px; line-height: 18px; }
`;
const ViewButton = styled.button`
  width: 19px; height: 19px; display: grid; place-items: center;
  ${(p) => p.$on && "background: #fbd56f; border: 1px solid #c39a3c; border-radius: 2px;"}
`;

/* ---------- Data ---------- */

const TABLES = ["t_logiciel", "t_nom_logiciel", "t_processusFIM", "t_RMA", "t_SN_appareils", "t_status", "t_technicien", "t_ticket", "t_type_appareil"];
const QUERIES = ["R_id_client", "r_RetourPROD", "r_RetourSAV", "r_RMA_filtre_print", "r_RMA_filtre_print2", "r_triModeleAppareil_t_tic...", "Rechercher les doublons ...", "requete1", "t_ticket Requête"];
const FORMS = ["f_accessoires", "f_client", "f_client sous-formulaire", "f_etats", "f_EtatsIndicateursQual", "f_logiciel", "f_menu_principal", "f_RMA", "f_SN_appareils", "f_technicien", "f_ticket", "f_type_appareil", "sf_entrée", "t_entrees sous-formulaire"];

const Small = ({ icon, glyph, children, menu, disabled }) => (
  <SmallButton disabled={disabled}>
    {glyph || <Icon name={icon} />}
    {children}
    {menu && <Caret $dim={disabled} />}
  </SmallButton>
);

const Items = ({ names, icon }) => names.map((n) => (
  <NavItem key={n} $hover={n === "f_ticket"}><Icon name={icon} /><span>{n}</span></NavItem>
));

const Split = ({ children }) => <Tool $split disabled>{children}<Caret $dim /></Tool>;

export default function App() {
  return (
    <Window>
      <Global />
      <TitleBar>
        <Glass />
        <Smudges>
          <Smudge $w={80} /><Smudge $w={8} /><Smudge $w={16} $c="#8fb0e6" $gap={8} /><Smudge $w={38} /><Smudge $w={8} $gap={90} />
          <Smudge $w={18} $c="#8fa3b0" $gap={4} /><Smudge $w={125} /><Smudge $w={14} $c="#b39a58" $gap={16} /><Smudge $w={130} />
        </Smudges>
        <Quick>
          <Icon name="app" />
          <Bar $h={12} />
          <button aria-label="Enregistrer"><Icon name="save" size={14} /></button>
          <button aria-label="Annuler"><Icon name="undo" size={14} /><Caret /></button>
          <button aria-label="Rétablir" disabled><Icon name="redo" size={14} /><Caret $dim /></button>
          <Bar $h={16} $c="#333" />
          <button aria-label="Personnaliser"><CustomMark><Caret /></CustomMark></button>
        </Quick>
        <Title>Ticket SAV</Title>
        <WinButtons>
          <WinGroup>
            <WinButton $w={28} aria-label="Étendre">
              <svg width="18" height="10" viewBox="0 0 18 10"><path d="M1 5L5 1V3.500H13V1L17 5L13 9V6.500H5V9Z" fill="#fff" stroke="#444" /></svg>
            </WinButton>
          </WinGroup>
          <WinGroup>
            <WinButton $w={28} aria-label="Réduire">
              <svg width="14" height="12"><rect x="1.500" y="6.500" width="11" height="4" fill="#fff" stroke="#555" /></svg>
            </WinButton>
            <WinButton $w={27} aria-label="Restaurer">
              <svg width="14" height="12"><path d="M4.500 .5H12.500V8.500H4.500Z" fill="#fff" stroke="#555" /><path d="M1.500 3.500H9.500V11.500H1.500Z" fill="#fff" stroke="#555" /><rect x="4.500" y="6.500" width="2" height="2" fill="#888" stroke="#555" /></svg>
            </WinButton>
            <WinButton $w={47} $red aria-label="Fermer">
              <svg width="12" height="11"><path d="M2 1.500L10 9.500M10 1.500L2 9.500" stroke="#4a2a2a" strokeWidth="4" /><path d="M2 1.500L10 9.500M10 1.500L2 9.500" stroke="#fff" strokeWidth="2.500" /></svg>
            </WinButton>
          </WinGroup>
        </WinButtons>
      </TitleBar>

      <RibbonTabs>
        <FileTab>Fichier</FileTab>
        <RibbonTab $on>Accueil</RibbonTab>
        <RibbonTab>Créer</RibbonTab>
        <RibbonTab>Données externes</RibbonTab>
        <RibbonTab>Outils de base de données</RibbonTab>
        <TabsEnd>
          <Icon name="caretUp" />
          <Help aria-label="Aide">?</Help>
        </TabsEnd>
      </RibbonTabs>

      <Ribbon>
        <Group $w={62}>
          <GroupBody>
            <BigButton $w={61}><Icon name="formView" />Affichage<Caret /></BigButton>
          </GroupBody>
          <GroupName>Affichages</GroupName>
        </Group>
        <Group $w={222}>
          <GroupBody>
            <BigButton $w={50} disabled><Icon name="paste" />Coller<Caret $dim /></BigButton>
            <Column $w={168}>
              <Small icon="cut">Couper</Small>
              <Small icon="copy">Copier</Small>
              <Small icon="brush" disabled>Reproduire la mise en forme</Small>
            </Column>
          </GroupBody>
          <GroupName>Presse-papiers<button aria-label="Options du Presse-papiers"><Icon name="launcher" /></button></GroupName>
        </Group>
        <Group $w={315}>
          <GroupBody>
            <BigButton $w={50}><Icon name="funnelBig" />Filtrer</BigButton>
            <Column $w={111}>
              <Small glyph={<SortGlyph $top="#2a4f9e" $bottom="#a03a3a"><b>A<em>Z</em></b><Icon name="arrowDown16" /></SortGlyph>}>Croissant</Small>
              <Small glyph={<SortGlyph $top="#a03a3a" $bottom="#2a4f9e"><b>Z<em>A</em></b><Icon name="arrowDown16" /></SortGlyph>}>Décroissant</Small>
              <Small disabled glyph={<SortGlyph $top="#999" $bottom="#999"><b>A<em>Z</em></b><Icon name="eraser" /></SortGlyph>}>Supprimer un tri</Small>
            </Column>
            <Column $w={150}>
              <Small icon="selection" menu>Sélection</Small>
              <Small icon="advanced" menu>Options avancées</Small>
              <Small icon="funnelGrey" disabled>Activer/désactiver le filtre</Small>
            </Column>
          </GroupBody>
          <GroupName>Trier et filtrer</GroupName>
        </Group>
        <Group $w={247}>
          <GroupBody>
            <BigButton $w={63}><Icon name="refresh" />Actualiser<span>tout<Caret /></span></BigButton>
            <Column $w={89}>
              <Small icon="newRecord">Nouveau</Small>
              <Small icon="saveRecord">Enregistrer</Small>
              <Small icon="delete" menu>Supprimer</Small>
            </Column>
            <Column $w={90}>
              <Small icon="sigma" disabled>Totaux</Small>
              <Small glyph={<AbcGlyph>ABC<Icon name="check" /></AbcGlyph>}>Orthographe</Small>
              <Small icon="more" disabled menu>Plus</Small>
            </Column>
          </GroupBody>
          <GroupName>Enregistrements</GroupName>
        </Group>
        <Group $w={170}>
          <GroupBody>
            <BigButton $w={70}><Icon name="binoBig" />Rechercher</BigButton>
            <Column $w={98}>
              <Small glyph={<AbGlyph><span>a<em>b</em></span><u>a<em>c</em></u></AbGlyph>}>Remplacer</Small>
              <Small icon="goto" menu>Atteindre</Small>
              <Small icon="cursor" menu>Sélectionner</Small>
            </Column>
          </GroupBody>
          <GroupName>Rechercher</GroupName>
        </Group>
        <Group $w={352}>
          <FormatBody>
            <FormatRow>
              <FontBox $w={139}><select disabled aria-label="Police" /><Caret /></FontBox>
              <FontBox $w={54}><select disabled aria-label="Taille" /><Caret /></FontBox>
              <Tool disabled aria-label="Puces"><Icon name="bullets" /></Tool>
              <Tool disabled aria-label="Numérotation"><Icon name="numbers" /></Tool>
              <ToolSep />
              <Tool disabled aria-label="Augmenter le retrait"><Icon name="indent" /></Tool>
              <Tool disabled aria-label="Diminuer le retrait"><Icon name="outdent" /></Tool>
              <ToolSep />
              <Split><Icon name="ltr" /></Split>
            </FormatRow>
            <FormatRow>
              <Tool disabled><b>G</b></Tool>
              <Tool disabled><em>I</em></Tool>
              <Tool disabled><u>S</u></Tool>
              <ToolSep />
              <Split><strong>A</strong></Split>
              <Split><Highlighter>ab<Icon name="highlight" /></Highlighter></Split>
              <Split><Icon name="bucket" /></Split>
              <ToolSep />
              <Tool disabled aria-label="Gauche"><Icon name="alignL" /></Tool>
              <Tool disabled aria-label="Centrer"><Icon name="alignC" /></Tool>
              <Tool disabled aria-label="Droite"><Icon name="alignR" /></Tool>
              <ToolSep />
              <Split><Icon name="grid" /></Split>
              <ToolSep />
              <Split><Icon name="altFill" /></Split>
            </FormatRow>
          </FormatBody>
          <GroupName>Mise en forme du texte<button aria-label="Options de mise en forme"><Icon name="launcher" /></button></GroupName>
        </Group>
      </Ribbon>

      <Workspace>
        <NavPane>
          <NavHead>
            <h2>Tous les objets Access</h2>
            <button aria-label="Menu"><Icon name="menuCircle" /></button>
            <button aria-label="Réduire le volet"><Icon name="chevLeft" /></button>
          </NavHead>
          <NavSearch>
            <input aria-label="Rechercher" placeholder="Rechercher..." />
            <Icon name="search" />
          </NavSearch>
          <NavBody>
            <NavList>
              <Items names={TABLES} icon="table" />
              <NavGroup>Requêtes<Icon name="chevUp" /></NavGroup>
              <Items names={QUERIES} icon="query" />
              <NavGroup>Formulaires<Icon name="chevUp" /></NavGroup>
              <Items names={FORMS} icon="form" />
            </NavList>
            <ScrollBar w={16} before={89} thumb={492} after={186} />
          </NavBody>
        </NavPane>

        <Documents>
          <DocTabs>
            <DocTab $w={126} $z={4}><Icon name="form" />f_menu_principal</DocTab>
            <DocTab $w={85} $z={3}><Icon name="relations" />Relations</DocTab>
            <DocTab $w={83} $z={2}><Icon name="table" />t_entrees</DocTab>
            <DocTab $w={70} $on><Icon name="form" />f_RMA</DocTab>
            <button aria-label="Fermer">×</button>
          </DocTabs>
          <DocBody>
            <FormView>
              <FormHeader>
                <h2>RMA</h2>
                <FormButton aria-label="Premier"><Icon name="first" /></FormButton>
                <FormButton aria-label="Précédent"><Icon name="prev" /></FormButton>
                <FormButton aria-label="Suivant"><Icon name="next" /></FormButton>
                <FormButton aria-label="Dernier"><Icon name="last" /></FormButton>
                <FormButton aria-label="Nouveau"><Icon name="newRecord" /></FormButton>
                <FormButton aria-label="Enregistrer"><Icon name="saveRecord" /></FormButton>
                <FormButton aria-label="Quitter" $w={40} $h={40} $m="0 0 0 83px"><Icon name="exit" /></FormButton>
                <FormButton aria-label="Rechercher" $w={40} $h={40} $m="4px 0 0 3px"><Icon name="binoSmall" /></FormButton>
              </FormHeader>
              <Detail>
                <Selector><Icon name="pencil" /></Selector>
                <Fields>
                  <Row $in={83}>
                    <Label $w={113} htmlFor="id">id_RMA</Label>
                    <TextBox id="id" $w={114} $h={22} $right defaultValue="5" />
                  </Row>
                  <Row $in={23} $mt={2}>
                    <Label $w={170} htmlFor="num">RMA #</Label>
                    <BigBox id="num" defaultValue="2014-5" />
                  </Row>
                  <Row $in={26} $mt={11}>
                    <Label htmlFor="app">Appareil</Label>
                    <Combo $w={220}><select id="app" className="picked"><option>Autre pas de sn</option></select></Combo>
                  </Row>
                  <TabSet>
                    <TabHeads>
                      <TabHead $on>Creation RMA</TabHead>
                      <TabHead>Entrées</TabHead>
                    </TabHeads>
                    <TabPanel>
                      <Row>
                        <Label htmlFor="dc">date creation RMA</Label>
                        <TextBox id="dc" $w={109} $right defaultValue="03/06/2014" />
                      </Row>
                      <Row $mt={4}>
                        <Label htmlFor="dp">date peremption RMA</Label>
                        <TextBox id="dp" $w={109} $right defaultValue="17/06/2014" />
                      </Row>
                      <Row $mt={4}>
                        <Label htmlFor="rr">Raison du retour</Label>
                        <Memo id="rr" defaultValue="etalonnage cofrac" />
                        <Trailing />
                      </Row>
                      <Row $mt={16}>
                        <Label htmlFor="cp">RMA créé par</Label>
                        <Combo $w={201}><select id="cp"><option>Talois</option></select></Combo>
                      </Row>
                      <Row $mt={12}>
                        <Label htmlFor="cl">Client</Label>
                        <Combo $right><select id="cl"><option>324</option></select></Combo>
                        <Trailing><FormButton aria-label="Ouvrir le client" $w={39} $h={21}><Icon name="formBlue" /></FormButton></Trailing>
                      </Row>
                      <Row $mt={5}>
                        <Label htmlFor="tl">Ticket Lié</Label>
                        <TextBox id="tl" $w={103} />
                      </Row>
                      <FormButton aria-label="Imprimer" $w={39} $h={40} $m="101px 0 0 37px"><Icon name="print" /></FormButton>
                    </TabPanel>
                  </TabSet>
                </Fields>
              </Detail>
            </FormView>
            <ScrollBar w={17} before={1} thumb={578} after={196} />
          </DocBody>
          <RecordBar>
            Enr :&nbsp;
            <button aria-label="Premier"><Icon name="nFirst" /></button>
            <button aria-label="Précédent"><Icon name="nPrev" /></button>
            <BarInput aria-label="Enregistrement" defaultValue="5 sur 5" $w={50} />
            <button aria-label="Suivant"><Icon name="nNext" /></button>
            <button aria-label="Dernier"><Icon name="nLast" /></button>
            <button aria-label="Nouveau"><Icon name="nNew" /></button>
            <NoFilter><Icon name="noFilter" />Aucun filtre</NoFilter>
            <BarInput aria-label="Rechercher" defaultValue="Rechercher" $w={70} />
          </RecordBar>
        </Documents>
      </Workspace>

      <StatusBar>
        <span>Mode Formulaire</span>
        <span>Verr. num.</span>
        <Bar $h={16} />
        <ViewButton $on aria-label="Formulaire"><Icon name="formBlue" size={14} /></ViewButton>
        <ViewButton aria-label="Feuille de données"><Icon name="datasheet" /></ViewButton>
        <ViewButton aria-label="Création"><Icon name="design" /></ViewButton>
      </StatusBar>
    </Window>
  );
}
